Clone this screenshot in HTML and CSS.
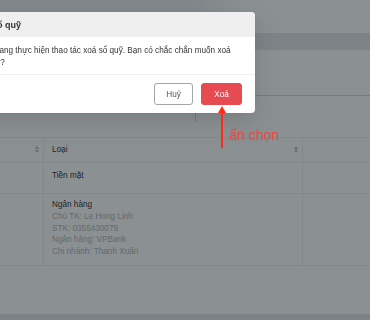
FILE: index.html
```html
<!DOCTYPE html>
<html lang="vi">

<head>
  <meta charset="UTF-8" />
  <title>Sổ quỹ</title>
  <link rel="stylesheet" href="styles.css">
</head>

<body>
  <div class="page">
    <div class="topbar"></div>
    <div class="band"></div>
    <div class="filters">
      <div class="filter-box"></div>
    </div>

    <table class="grid">
      <thead>
        <tr>
          <th class="col-a"><span class="sorter"><i class="up"></i><i class="down"></i></span></th>
          <th class="col-b">Loại <span class="sorter"><i class="up"></i><i class="down"></i></span></th>
          <th class="col-c"></th>
        </tr>
      </thead>
      <tbody>
        <tr class="row-short">
          <td class="col-a"></td>
          <td class="col-b">Tiền mặt</td>
          <td class="col-c"></td>
        </tr>
        <tr class="row-bank">
          <td class="col-a"></td>
          <td class="col-b">
            <div class="main">Ngân hàng</div>
            <div class="sub">Chủ TK: Le Hong Linh</div>
            <div class="sub">STK: 0355430079</div>
            <div class="sub">Ngân hàng: VPBank</div>
            <div class="sub">Chi nhánh: Thanh Xuân</div>
          </td>
          <td class="col-c"></td>
        </tr>
      </tbody>
    </table>

    <div class="spacer"></div>
    <div class="footer"></div>
  </div>

  <div class="mask"></div>

  <div class="modal">
    <div class="modal-header">Xoá sổ quỹ</div>
    <div class="modal-body">Bạn đang thực hiện thao tác xoá sổ quỹ. Bạn có chắc chắn muốn xoá không?</div>
    <div class="modal-footer">
      <button type="button" class="btn">Huỷ</button>
      <button type="button" class="btn btn-danger">Xoá</button>
    </div>
  </div>

  <!-- chú thích -->
  <div class="note">
    <svg class="arrow" width="10" height="42" viewBox="0 0 10 42">
      <path d="M5 0 L9 7 L1 7 Z" fill="#ff2a14" />
      <rect x="4" y="6" width="2" height="36" fill="#ff2a14" />
    </svg>
    <span class="note-text">ấn chọn</span>
  </div>
</body>

</html>
```

FILE: styles.css
```css
body {
  margin: 0;
  font-family: "Liberation Sans", Arial, sans-serif;
  background: #fff;
  width: 370px;
  height: 320px;
  overflow: hidden;
}

.page {
  width: 370px;
}

.topbar {
  height: 33px;
  background: linear-gradient(to right, #eef0f2 0, #eef0f2 190px, #fff 240px);
}

.band {
  height: 17px;
  background: #e6e9eb;
}

.filters {
  height: 71px;
  padding: 45px 0 0 195px;
  box-sizing: border-box;
}

.filter-box {
  height: 26px;
  border: 1px solid #d9d9d9;
  border-right: none;
  border-bottom: none;
  border-radius: 3px 0 0 0;
}

.grid {
  margin-top: 16px;
  width: 100%;
  border-collapse: collapse;
  table-layout: fixed;
  font-size: 8.2px;
  color: #3a3a3a;
}

.grid th,
.grid td {
  border-top: 1px solid #f0f0f0;
  border-bottom: 1px solid #f0f0f0;
  text-align: left;
  vertical-align: top;
  padding: 7px 8px 6px;
  line-height: 11.75px;
}

.grid th {
  font-weight: normal;
  height: 24px;
  padding: 0 8px;
  vertical-align: middle;
  position: relative;
}

.col-a {
  width: 27px;
  border-right: 1px solid #f0f0f0;
}

.col-b {
  width: 242px;
  border-right: 1px solid #f0f0f0;
}

.row-short td {
  height: 17px;
}

.row-bank td {
  padding-top: 5px;
  padding-bottom: 7px;
}

.sorter {
  position: absolute;
  right: 4px;
  top: 8px;
  display: flex;
  flex-direction: column;
  gap: 1px;
}

.sorter i {
  width: 0;
  height: 0;
  border-left: 2.5px solid transparent;
  border-right: 2.5px solid transparent;
}

.sorter .up {
  border-bottom: 3px solid #bfbfbf;
}

.sorter .down {
  border-top: 3px solid #bfbfbf;
}

.sub {
  color: #b8b8b8;
}

.spacer {
  height: 48px;
}

.footer {
  height: 20px;
  background: #e4e7e9;
}

.mask {
  position: fixed;
  inset: 0;
  background: rgba(3, 12, 18, 0.46);
}

.modal {
  position: absolute;
  left: -35px;
  top: 12px;
  width: 290px;
  background: #fff;
  border-radius: 4px;
  overflow: hidden;
  box-shadow: 0 6px 16px rgba(0, 0, 0, 0.08), 0 9px 28px 8px rgba(0, 0, 0, 0.05);
  color: #333;
}

.modal-header {
  height: 25px;
  line-height: 26px;
  padding: 0 13px 0 8px;
  background: #efefef;
  font-size: 9px;
  font-weight: bold;
}

.modal-body {
  padding: 8px 13px 6px;
  font-size: 8.2px;
  line-height: 11.5px;
  border-bottom: 1px solid #eeeeee;
}

.modal-footer {
  display: flex;
  justify-content: flex-end;
  gap: 8px;
  padding: 8px 13px 8px;
}

.btn {
  height: 22px;
  width: 39px;
  padding: 0;
  font-family: inherit;
  font-size: 8.2px;
  color: #555;
  background: #fff;
  border: 1px solid #a6a6a6;
  border-radius: 3px;
  cursor: pointer;
}

.btn-danger {
  width: 41px;
  background: #e64b51;
  border-color: #e64b51;
  color: #fff;
}

.note {
  position: absolute;
  left: 217px;
  top: 106px;
  display: flex;
  align-items: flex-start;
  gap: 2px;
}

.note-text {
  margin-top: 21px;
  font-size: 14px;
  color: #f0453a;
}
```
